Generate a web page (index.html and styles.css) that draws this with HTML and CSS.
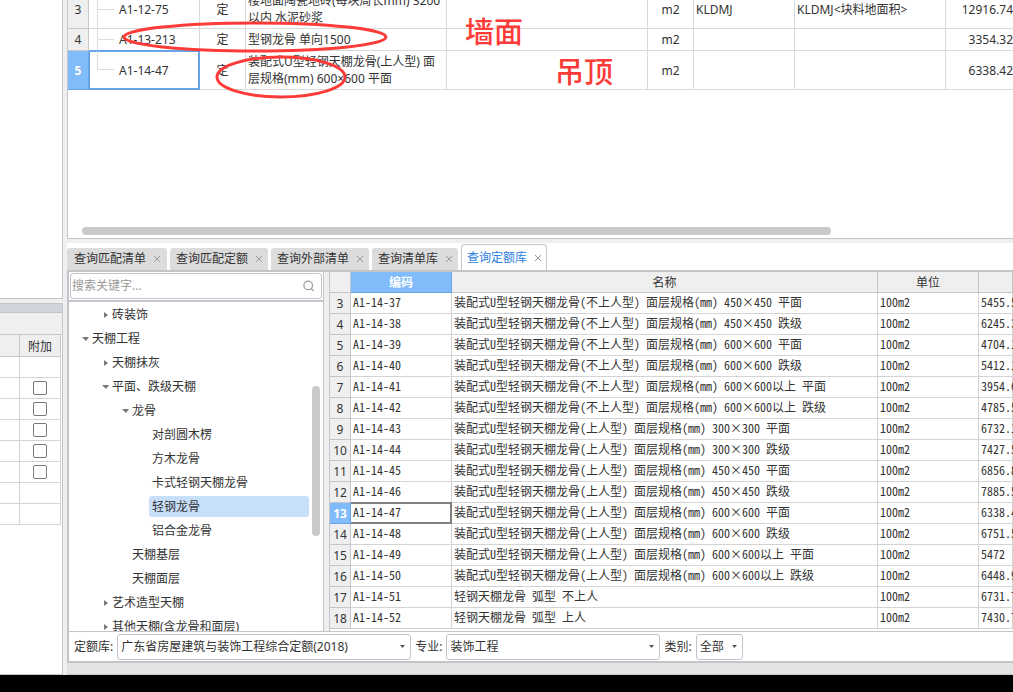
FILE: index.html
```html
<!DOCTYPE html>
<html lang="zh-CN">
<head>
<meta charset="utf-8">
<title>查询定额库</title>
<link rel="stylesheet" href="styles.css">
</head>
<body>
<div class="app">
  <aside class="side">
    <div class="side-top"></div>
    <div class="side-bottom">
      <div class="side-caption"></div>
      <div class="side-tools"></div>
      <table class="extra">
        <thead><tr><th class="rest"></th><th>附加</th></tr></thead>
        <tbody>
          <tr><td></td><td></td></tr>
          <tr><td></td><td><input type="checkbox" aria-label="附加 1"></td></tr>
          <tr><td></td><td><input type="checkbox" aria-label="附加 2"></td></tr>
          <tr><td></td><td><input type="checkbox" aria-label="附加 3"></td></tr>
          <tr><td></td><td><input type="checkbox" aria-label="附加 4"></td></tr>
          <tr><td></td><td><input type="checkbox" aria-label="附加 5"></td></tr>
          <tr><td></td><td></td></tr>
          <tr><td></td><td></td></tr>
        </tbody>
      </table>
    </div>
  </aside>

  <main class="main">
    <section class="items">
      <table class="list">
        <colgroup><col class="w-no"><col class="w-code"><col class="w-kind"><col class="w-name"><col class="w-spec"><col class="w-unit"><col class="w-expr"><col class="w-note"><col></colgroup>
        <tbody>
          <tr class="tall"><th>3</th><td class="code"><span class="branch"></span>A1-12-75</td><td class="mid">定</td><td>楼地面陶瓷地砖(每块周长mm) 3200以内 水泥砂浆</td><td></td><td class="mid">m2</td><td>KLDMJ</td><td>KLDMJ&lt;块料地面积&gt;</td><td class="num">12916.74</td></tr>
          <tr><th>4</th><td class="code"><span class="branch"></span>A1-13-213</td><td class="mid">定</td><td>型钢龙骨 单向1500</td><td></td><td class="mid">m2</td><td></td><td></td><td class="num">3354.32</td></tr>
          <tr class="tall current"><th>5</th><td class="code"><span class="branch last"></span>A1-14-47</td><td class="mid">定</td><td>装配式U型轻钢天棚龙骨(上人型) 面层规格(mm) 600×600 平面</td><td></td><td class="mid">m2</td><td></td><td></td><td class="num">6338.42</td></tr>
        </tbody>
      </table>
      <div class="hscroll"></div>
      <svg class="marks" width="420" height="110" viewBox="0 0 420 110" fill="none" stroke="#fd3b39" stroke-width="3">
        <ellipse cx="187" cy="37" rx="131" ry="14"/>
        <ellipse cx="213" cy="77" rx="64" ry="20"/>
      </svg>
      <span class="mark wall">墙面</span>
      <span class="mark ceiling">吊顶</span>
    </section>

    <nav class="tabs">
      <div class="tab"><button class="tab-name">查询匹配清单</button><button class="tab-close" aria-label="关闭"><svg width="6" height="6" viewBox="0 0 6 6"><path d="M0 0L6 6M6 0L0 6"/></svg></button></div>
      <div class="tab"><button class="tab-name">查询匹配定额</button><button class="tab-close" aria-label="关闭"><svg width="6" height="6" viewBox="0 0 6 6"><path d="M0 0L6 6M6 0L0 6"/></svg></button></div>
      <div class="tab"><button class="tab-name">查询外部清单</button><button class="tab-close" aria-label="关闭"><svg width="6" height="6" viewBox="0 0 6 6"><path d="M0 0L6 6M6 0L0 6"/></svg></button></div>
      <div class="tab"><button class="tab-name">查询清单库</button><button class="tab-close" aria-label="关闭"><svg width="6" height="6" viewBox="0 0 6 6"><path d="M0 0L6 6M6 0L0 6"/></svg></button></div>
      <div class="tab active"><button class="tab-name">查询定额库</button><button class="tab-close" aria-label="关闭"><svg width="6" height="6" viewBox="0 0 6 6"><path d="M0 0L6 6M6 0L0 6"/></svg></button></div>
    </nav>

    <section class="query">
      <div class="panes">
        <div class="tree-pane">
          <label class="search">
            <input type="text" placeholder="搜索关键字..." aria-label="搜索关键字">
            <svg width="12" height="12" viewBox="0 0 12 12" fill="none" stroke="#a0a0a0" stroke-width="1.3"><circle cx="5.2" cy="5.4" r="4.3"/><path d="M8.2 8.6L10.6 11"/></svg>
          </label>
          <div class="tree-body">
            <ul class="tree">
              <li class="l2 shut">砖装饰</li>
              <li class="l1 open">天棚工程</li>
              <li class="l2 shut">天棚抹灰</li>
              <li class="l2 open">平面、跌级天棚</li>
              <li class="l3 open">龙骨</li>
              <li class="l4">对剖圆木楞</li>
              <li class="l4">方木龙骨</li>
              <li class="l4">卡式轻钢天棚龙骨</li>
              <li class="l4 picked"><span>轻钢龙骨</span></li>
              <li class="l4">铝合金龙骨</li>
              <li class="l3">天棚基层</li>
              <li class="l3">天棚面层</li>
              <li class="l2 shut">艺术造型天棚</li>
              <li class="l2 shut">其他天棚(含龙骨和面层)</li>
            </ul>
            <div class="vscroll"></div>
          </div>
        </div>
        <div class="grid-pane">
          <table class="grid">
            <colgroup><col class="g-no"><col class="g-code"><col class="g-name"><col class="g-unit"><col></colgroup>
            <thead><tr><th></th><th class="on">编码</th><th>名称</th><th>单位</th><th></th></tr></thead>
            <tbody>
              <tr><th>3</th><td>A1-14-37</td><td>装配式U型轻钢天棚龙骨(不上人型) 面层规格(mm) 450×450 平面</td><td>100m2</td><td>5455.5</td></tr>
              <tr><th>4</th><td>A1-14-38</td><td>装配式U型轻钢天棚龙骨(不上人型) 面层规格(mm) 450×450 跌级</td><td>100m2</td><td>6245.3</td></tr>
              <tr><th>5</th><td>A1-14-39</td><td>装配式U型轻钢天棚龙骨(不上人型) 面层规格(mm) 600×600 平面</td><td>100m2</td><td>4704.1</td></tr>
              <tr><th>6</th><td>A1-14-40</td><td>装配式U型轻钢天棚龙骨(不上人型) 面层规格(mm) 600×600 跌级</td><td>100m2</td><td>5412.1</td></tr>
              <tr><th>7</th><td>A1-14-41</td><td>装配式U型轻钢天棚龙骨(不上人型) 面层规格(mm) 600×600以上 平面</td><td>100m2</td><td>3954.6</td></tr>
              <tr><th>8</th><td>A1-14-42</td><td>装配式U型轻钢天棚龙骨(不上人型) 面层规格(mm) 600×600以上 跌级</td><td>100m2</td><td>4785.5</td></tr>
              <tr><th>9</th><td>A1-14-43</td><td>装配式U型轻钢天棚龙骨(上人型) 面层规格(mm) 300×300 平面</td><td>100m2</td><td>6732.1</td></tr>
              <tr><th>10</th><td>A1-14-44</td><td>装配式U型轻钢天棚龙骨(上人型) 面层规格(mm) 300×300 跌级</td><td>100m2</td><td>7427.5</td></tr>
              <tr><th>11</th><td>A1-14-45</td><td>装配式U型轻钢天棚龙骨(上人型) 面层规格(mm) 450×450 平面</td><td>100m2</td><td>6856.8</td></tr>
              <tr><th>12</th><td>A1-14-46</td><td>装配式U型轻钢天棚龙骨(上人型) 面层规格(mm) 450×450 跌级</td><td>100m2</td><td>7885.5</td></tr>
              <tr class="current"><th>13</th><td>A1-14-47</td><td>装配式U型轻钢天棚龙骨(上人型) 面层规格(mm) 600×600 平面</td><td>100m2</td><td>6338.4</td></tr>
              <tr><th>14</th><td>A1-14-48</td><td>装配式U型轻钢天棚龙骨(上人型) 面层规格(mm) 600×600 跌级</td><td>100m2</td><td>6751.5</td></tr>
              <tr><th>15</th><td>A1-14-49</td><td>装配式U型轻钢天棚龙骨(上人型) 面层规格(mm) 600×600以上 平面</td><td>100m2</td><td>5472</td></tr>
              <tr><th>16</th><td>A1-14-50</td><td>装配式U型轻钢天棚龙骨(上人型) 面层规格(mm) 600×600以上 跌级</td><td>100m2</td><td>6448.9</td></tr>
              <tr><th>17</th><td>A1-14-51</td><td>轻钢天棚龙骨 弧型 不上人</td><td>100m2</td><td>6731.7</td></tr>
              <tr><th>18</th><td>A1-14-52</td><td>轻钢天棚龙骨 弧型 上人</td><td>100m2</td><td>7430.7</td></tr>
            </tbody>
          </table>
        </div>
      </div>
      <form class="filters">
        <label for="lib">定额库:</label>
        <select id="lib" class="lib"><option>广东省房屋建筑与装饰工程综合定额(2018)</option></select>
        <label for="major">专业:</label>
        <select id="major" class="major"><option>装饰工程</option></select>
        <label for="type">类别:</label>
        <select id="type" class="type"><option>全部</option></select>
      </form>
    </section>
    <div class="status"></div>
  </main>
</div>
<footer class="taskbar"></footer>
</body>
</html>
```

FILE: styles.css
```css
* { box-sizing: border-box; }

body {
  margin: 0;
  height: 100vh;
  display: flex;
  flex-direction: column;
  overflow: hidden;
  background: #efefef;
  color: #333;
  font: 12px/16px "Noto Sans", "Noto Sans CJK SC", sans-serif;
}

button, input, select { font: inherit; color: inherit; }
table { border-collapse: separate; border-spacing: 0; table-layout: fixed; }
th, td { padding: 0; font-weight: normal; }

.app { flex: 1; min-height: 0; display: flex; gap: 4px; }
.taskbar { height: 17px; background: #000; }

/* left column */
.side { width: 63px; display: flex; flex-direction: column; gap: 4px; }
.side-top { height: 299px; background: #fff; border: solid #c3c5cb; border-width: 0 1px 1px 0; }
.side-bottom { flex: 1; background: #fff; border: solid #c3c5cb; border-width: 1px 1px 1px 0; }
.side-caption { height: 9px; background: #d1d4db; border-bottom: 1px solid #c3c5cb; }
.side-tools { height: 22px; background: #efefef; border-bottom: 1px solid #c3c5cb; }
.extra { width: 61px; }
.extra th, .extra td { height: 21px; text-align: center; line-height: 16px; border: solid #d4d4d4; border-width: 0 1px 1px 0; }
.extra th { height: 22px; padding-top: 2px; background: #efefef; border-color: #c8c8c8; }
.extra .rest { width: 20px; }
.extra input { appearance: none; display: block; width: 14px; height: 14px; margin: 0 auto; border: 1px solid #777; border-radius: 2px; background: #fff; }

.main { flex: 1; min-width: 0; display: flex; flex-direction: column; }

/* upper list */
.items { position: relative; height: 239px; overflow: hidden; background: #fff; border: solid #c3c5cb; border-width: 0 0 1px 1px; display: flex; flex-direction: column; justify-content: space-between; }
.list { width: 100%; min-width: 945px; margin-top: -10px; line-height: 17px; }
.list th, .list td { height: 22px; border: solid #d9d9d9; border-width: 0 1px 1px 0; }
.list .tall th, .list .tall td { height: 39px; }
.list th { background: #efefef; border-color: #c8c8c8; }
.list td { padding: 0 1px 0 2px; }
.list .mid { text-align: center; padding: 0; }
.list .num { text-align: right; padding: 0; border-right: 0; }
.list .code { position: relative; padding-left: 30px; }
.list .current th { background: #80bbfa; color: #fff; font-weight: bold; border-color: #66a6e8; }
.list .current .code { box-shadow: inset 0 0 0 1px #66a6e8, 0 -1px #66a6e8; border-color: #66a6e8; }
.w-no { width: 21px; }
.w-code { width: 111px; }
.w-kind { width: 46px; }
.w-name, .w-spec { width: 201px; }
.w-unit { width: 46px; }
.w-expr { width: 101px; }
.w-note { width: 151px; }
.branch { position: absolute; left: 8px; top: 0; bottom: 0; width: 17px; border-left: 1px solid #dcdcdc; background: linear-gradient(#dcdcdc, #dcdcdc) 0 50% / 17px 1px no-repeat; }
.branch.last { bottom: 50%; background-position: 0 100%; }
.hscroll { width: 749px; height: 8px; margin: 0 0 3px 14px; border-radius: 4px; background: #cacaca; }
.marks { position: absolute; left: 0; top: 0; }
.mark { position: absolute; color: #fd3b39; font: 500 29px/34px "Noto Sans CJK SC", sans-serif; }
.wall { left: 397px; top: 13px; }
.ceiling { left: 487px; top: 53px; }

/* tabs */
.tabs { height: 27px; margin-top: 4px; background: #fff; display: flex; align-items: flex-end; gap: 3px; }
.tab { height: 22px; padding: 0 6px; display: flex; align-items: center; gap: 8px; background: #dcdcdc; border-radius: 3px 3px 0 0; }
.tab:first-child { padding: 0 7px; }
.tab button { border: 0; padding: 0; background: none; line-height: 16px; }
.tab-close { display: flex; }
.tab-close path { stroke: #999; stroke-width: 1; }
.tab.active { height: 26px; padding: 0 5px; background: #fff; color: #2a7de1; border: 1px solid #c3c5cb; border-bottom: 0; border-radius: 4px 4px 0 0; }

/* query area */
.query { flex: 1; min-height: 0; display: flex; flex-direction: column; border: 2px solid #c3c5cb; border-right: 0; background: #fff; }
.panes { flex: 1; min-height: 0; display: flex; gap: 5px; background: #efefef; }
.tree-pane { width: 255px; display: flex; flex-direction: column; background: #fff; border-right: 1px solid #c3c5cb; }
.search { display: flex; align-items: center; height: 26px; margin: 1px; padding: 0 6px 0 1px; border: 1px solid #c3c5cb; border-radius: 3px; }
.search input { flex: 1; min-width: 0; border: 0; padding: 0; background: none; outline: 0; }
.search input::placeholder { color: #999; opacity: 1; }
.tree-body { flex: 1; min-height: 0; display: flex; overflow: hidden; border-top: 2px solid #c3c5cb; }
.tree { flex: 1; margin: 0; padding: 1px 0 0; list-style: none; line-height: 24px; white-space: nowrap; }
.tree li { display: flex; align-items: center; height: 24px; }
.tree li::before { content: ""; width: 8px; height: 6px; margin-right: 2px; }
.tree .shut::before { background: #777; clip-path: polygon(2px 0, 6px 3px, 2px 6px); }
.tree .open::before { background: #777; clip-path: polygon(0 1px, 7px 1px, 4px 5px); }
.l1 { padding-left: 13px; }
.l2 { padding-left: 33px; }
.l3 { padding-left: 53px; }
.l4 { padding-left: 73px; }
.tree .picked { align-items: flex-start; padding: 1px 3px 0 72px; }
.tree .picked::before { margin-right: 0; }
.picked span { flex: 1; height: 21px; padding-left: 3px; line-height: 21px; border-radius: 3px; background: #c8dffa; }
.vscroll { width: 8px; height: 150px; margin: 84px 3px 0 0; border-radius: 4px; background: #cacaca; }

.grid-pane { flex: 1; min-width: 0; overflow: hidden; background: #fff; border-left: 1px solid #c3c5cb; }
.grid { width: 100%; min-width: 683px; }
.grid th, .grid td { height: 21px; border: solid #d4d4d4; border-width: 0 1px 1px 0; white-space: nowrap; }
.grid th { padding-top: 2px; line-height: 16px; background: #efefef; border-color: #c3c5cb; }
.grid .on { background: #80bbfa; color: #fff; font-weight: bold; border-color: #66a6e8; }
.grid td { padding: 0 0 3px 2px; font-family: "Noto Sans Mono CJK SC", "Noto Sans CJK SC", monospace; line-height: 16px; }
.grid .current th { background: #80bbfa; color: #fff; font-weight: bold; border-color: #66a6e8; }
.grid .current td:nth-child(2) { box-shadow: inset 0 1px #808080, inset -1px -1px #808080, 0 -1px #808080; border-color: #808080; }
.g-no { width: 21px; }
.g-code { width: 101px; }
.g-name { width: 426px; }
.g-unit { width: 101px; }

.filters { display: flex; align-items: center; gap: 4px; height: 30px; padding-left: 5px; border-top: 1px solid #c3c5cb; }
.filters select {
  appearance: none;
  height: 26px;
  padding: 0 3px;
  border: 1px solid #c3c5cb;
  border-radius: 3px;
  background: #fff url("data:image/svg+xml,%3Csvg xmlns='http://www.w3.org/2000/svg' width='5' height='3'%3E%3Cpath d='M0 0h5L2.5 3z' fill='%23505560'/%3E%3C/svg%3E") right 5px center no-repeat;
}
.filters .lib { width: 294px; }
.filters .major { width: 214px; }
.filters .type { width: 47px; }

.status { height: 12px; background: #e3e3e3; border-bottom: 1px solid #c8c8c8; }
```
